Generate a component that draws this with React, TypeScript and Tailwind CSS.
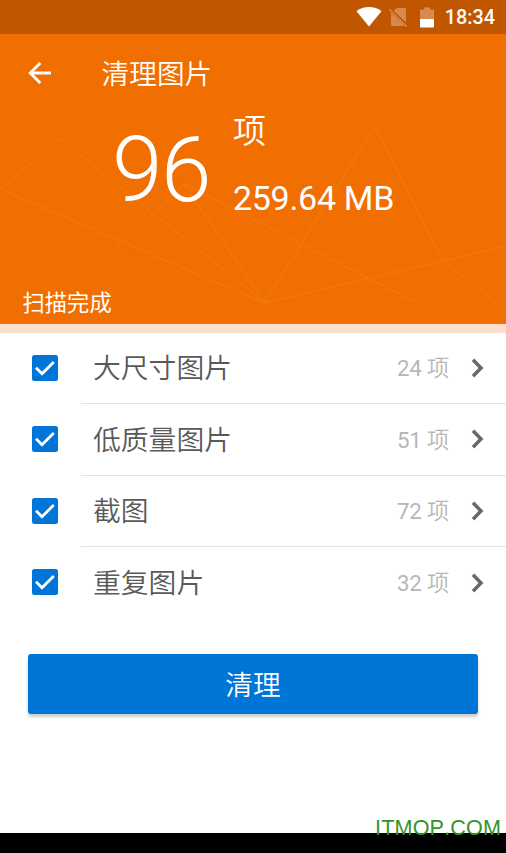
const rows = [
  { label: '大尺寸图片', count: 24 },
  { label: '低质量图片', count: 51 },
  { label: '截图', count: 72 },
  { label: '重复图片', count: 32 },
];

function StatusBar() {
  return (
    <div className="flex h-[34px] items-center justify-end bg-[#c05600] pr-[11px] text-white">
      <svg className="h-[20px] w-[26px]" viewBox="0 0 26 20" fill="currentColor">
        <path d="M0.5 4.2C7.5-1.4 18.5-1.4 25.5 4.2L13 19.5Z" />
      </svg>
      <svg className="ml-[7px] h-[20px] w-[19px]" viewBox="0 0 19 20" fill="#d4894f">
        <path d="M7.500 1H15.500Q17 1 17 2.500V15.500L4.500 4ZM2 5.500L15.500 19H3.500Q2 19 2 17.500Z" />
        <path d="M1.200 1.300L18.700 18.800" stroke="#c05600" strokeWidth="1.300" />
        <path d="M.3 2.200L17.800 19.700" stroke="#d4894f" strokeWidth="1.500" />
      </svg>
      <svg className="ml-[12px] h-[21px] w-[14px]" viewBox="0 0 14 21">
        <path d="M4 .5H10V2.500H12.800Q14 2.500 14 3.700V12H0V3.700Q0 2.500 1.200 2.500H4Z" fill="#d88b4e" />
        <path d="M0 12H14V19.500Q14 20.500 13 20.500H1Q0 20.500 0 19.500Z" fill="white" />
      </svg>
      <span className="mt-[2px] ml-[11px] text-[19.800px] leading-[34px] font-medium">18:34</span>
    </div>
  );
}

function Header() {
  return (
    <header className="relative h-[290px] bg-[#f06f00] text-white">
      <svg className="absolute inset-0 h-[290px] w-full" viewBox="0 34 506 290" fill="none" stroke="#f37b15" strokeWidth="1">
        <path d="M264 303L0 189L60 139L264 302L184 184L72 291M184 184L417 303M264 303L375 127L443 261L497 303M264 303L443 261L506 246" />
      </svg>
      <div className="relative flex h-[78px] items-center pl-[28px]">
        <svg className="h-[22px] w-[23px]" viewBox="0 0 23 22" fill="none" stroke="currentColor" strokeWidth="2.800">
          <path d="M23 11H2M12.300 .9L2.200 11L12.300 21.100" />
        </svg>
        <h1 className="mt-[4px] ml-[50.500px] text-[27.700px] leading-[40px] font-[350]">清理图片</h1>
      </div>
      <div className="relative flex h-[168px] pl-[112px]">
        <span className="w-[121px] pt-[8px] text-[91px] leading-[100px] font-light tracking-[-1.500px]">96</span>
        <div className="flex flex-col">
          <span className="mt-[1px] text-[33px] leading-[38px] font-[350]">项</span>
          <span className="mt-[27px] text-[34px] leading-[40px] tracking-[-0.300px]">259.64 MB</span>
        </div>
      </div>
      <p className="relative pl-[22.500px] text-[22.300px] leading-[46px]">扫描完成</p>
    </header>
  );
}

export default function App() {
  return (
    <main className="relative flex h-[853px] w-[506px] flex-col overflow-hidden bg-white font-['Roboto','Noto_Sans_CJK_SC',sans-serif]">
      <StatusBar />
      <Header />
      <div className="h-[9px] bg-[#fcdfca]" />
      <ul>
        {rows.map((row, i) => (
          <li key={row.label} className="flex h-[71.300px] pl-[32px]">
            <svg className="mt-[22px] h-[26px] w-[26px] shrink-0" viewBox="0 0 26 26">
              <rect width="26" height="26" rx="2.500" fill="#0075d8" />
              <path d="M4 12.700L10 18.700L21.800 6.900" fill="none" stroke="white" strokeWidth="2.800" />
            </svg>
            <div className={`ml-[23px] flex flex-1 items-center pr-[22px] pl-[12px] ${i < 3 ? 'border-b border-[#e2e2e2]' : ''}`}>
              <span className="flex-1 pt-[2px] text-[27.800px] font-[350] text-[#5a5a5a]">{row.label}</span>
              <span className="pt-[2px] text-[22.300px] tracking-[-0.200px] text-[#b7b7b7]">{row.count} <span className="font-[350]">项</span></span>
              <svg className="ml-[22px] h-[20px] w-[13px]" viewBox="0 0 13 20" fill="none" stroke="#696969" strokeWidth="3.500">
                <path d="M2 1.800L10 10L2 18.200" />
              </svg>
            </div>
          </li>
        ))}
      </ul>
      <button className="mx-[28px] mt-[36px] h-[60px] rounded-[3px] bg-[#0075d8] pt-[4px] text-[27.700px] font-[350] text-white shadow-[0_3px_3px_rgba(0,0,0,0.2)]">清理</button>
      <div className="mt-auto h-[20px] bg-black" />
      <span className="absolute top-[815px] left-[375px] font-['Liberation_Sans',sans-serif] text-[21.600px] leading-[26px] tracking-[0.150px] text-[#339427] [font-kerning:none]">ITMOP.COM</span>
    </main>
  );
}
